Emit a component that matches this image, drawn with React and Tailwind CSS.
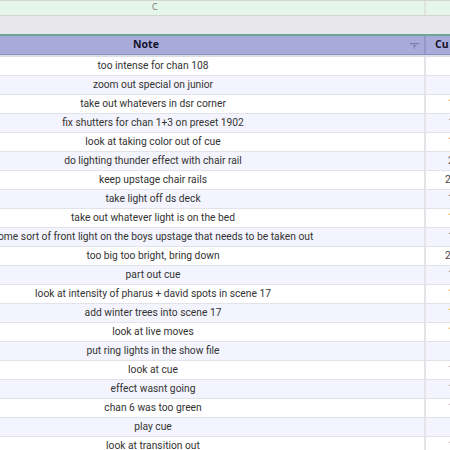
import React from "react";

const rows = [
  { t: "too intense for chan 108" },
  { t: "zoom out special on junior" },
  { t: "take out whatevers in dsr corner", tail: "1", c: "text-[#e2a34f]" },
  { t: "fix shutters for chan 1+3 on preset 1902", tail: "1", c: "text-[#9a9a9a]" },
  { t: "look at taking color out of cue", tail: "1", c: "text-[#d9824f]" },
  { t: "do lighting thunder effect with chair rail", tail: "2", c: "text-[#555]" },
  { t: "keep upstage chair rails", tail: "2", c: "text-[#444]", wide: true },
  { t: "take light off ds deck", tail: "1", c: "text-[#7a6a5a]" },
  { t: "take out whatever light is on the bed", tail: "1", c: "text-[#e2a34f]" },
  { t: "some sort of front light on the boys upstage that needs to be taken out", tail: "1", c: "text-[#8a8a8a]" },
  { t: "too big too bright, bring down", tail: "2", c: "text-[#444]", wide: true },
  { t: "part out cue", tail: "1", c: "text-[#8a8a8a]" },
  { t: "look at intensity of pharus + david spots in scene 17", tail: "1", c: "text-[#e2a34f]" },
  { t: "add winter trees into scene 17", tail: "1", c: "text-[#e2a34f]" },
  { t: "look at live moves", tail: "1", c: "text-[#e2a34f]" },
  { t: "put ring lights in the show file" },
  { t: "look at cue", tail: "1", c: "text-[#b0b0b0]" },
  { t: "effect wasnt going", tail: "1", c: "text-[#b0b0b0]" },
  { t: "chan 6 was too green", tail: "1", c: "text-[#b0b0b0]" },
  { t: "play cue" },
  { t: "look at transition out", tail: "1", c: "text-[#b0b0b0]" },
];

export default function App() {
  return (
    <div className="w-[450px] h-[450px] overflow-hidden bg-white font-['Roboto',sans-serif] text-[#333]">
      {/* column letter band */}
      <div className="flex h-[16px] border-t border-b border-[#d3d6d3] bg-[#e6f6ea]">
        <div className="w-[424px] flex items-center pl-[152px] text-[8px] text-[#777] font-['DejaVu_Sans',sans-serif]">C</div>
        <div className="flex-1 border-l-2 border-[#dde5de]" />
      </div>
      {/* grey band */}
      <div className="h-[18px] bg-[#e7e7ec]" />
      {/* teal line */}
      <div className="h-[2px] bg-[#6ea796]" />
      {/* header */}
      <div className="flex h-[19px] bg-[#a8aad9] border-b border-[#8d8fc4]">
        <div className="w-[424px] relative flex items-center">
          <span className="pl-[133px] text-[10.5px] font-bold text-[#14142a] font-['Noto_Sans',sans-serif]">Note</span>
          <svg className="absolute left-[410px] top-[7px]" width="9" height="6" viewBox="0 0 9 6">
            <rect x="0" y="0" width="9" height="1.3" fill="#7b7db3" />
            <path d="M2.5 2.2 H6.5 L5 3.8 V5.8 H4 V3.8 Z" fill="#7b7db3" />
          </svg>
        </div>
        <div className="flex-1 border-l-2 border-[#9597c9] flex items-center pl-[9px] text-[10.5px] font-bold text-[#14142a] font-['Noto_Sans',sans-serif] whitespace-nowrap">Cu</div>
      </div>
      <div className="h-[2px] bg-[#dcdce3]" />
      {rows.map((r, i) => (
        <div
          key={i}
          className={`flex h-[19px] border-b border-[#e2e2ea] ${i % 2 === 1 ? "bg-[#f3f4fd]" : "bg-white"}`}
        >
          <div className="w-[424px] overflow-hidden flex items-center text-[10.25px] whitespace-nowrap">
            <div className="w-[306px] flex justify-center">
              <span className="shrink-0">{r.t}</span>
            </div>
          </div>
          <div className="flex-1 border-l-2 border-[#e4e4e8] overflow-hidden flex items-center text-[10.25px] whitespace-nowrap">
            {r.tail && (
              <span className={`${r.wide ? "pl-[19px]" : "pl-[22px]"} ${r.c}`}>{r.tail}</span>
            )}
          </div>
        </div>
      ))}
    </div>
  );
}
